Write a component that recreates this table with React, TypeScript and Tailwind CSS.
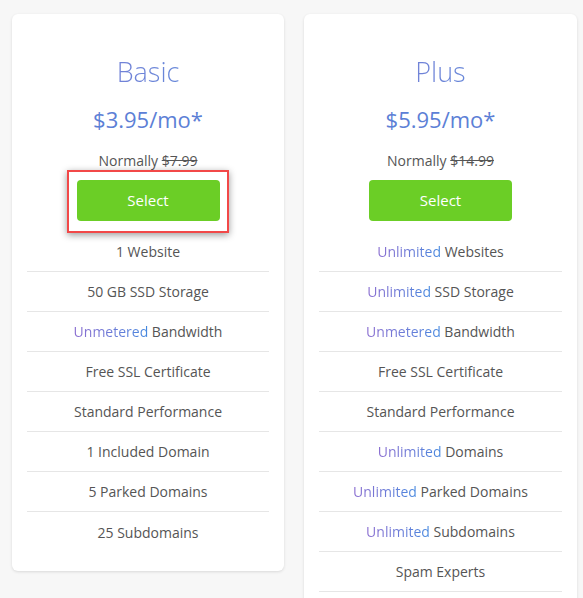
import React from "react";

type Feature = { hl?: string; text: string };

type Plan = {
  name: string;
  price: string;
  normally: string;
  features: Feature[];
  highlight?: boolean;
  width: string;
};

const plans: Plan[] = [
  {
    name: "Basic",
    price: "$3.95/mo*",
    normally: "$7.99",
    highlight: true,
    width: "w-[272px]",
    features: [
      { text: "1 Website" },
      { text: "50 GB SSD Storage" },
      { hl: "Unmetered", text: " Bandwidth" },
      { text: "Free SSL Certificate" },
      { text: "Standard Performance" },
      { text: "1 Included Domain" },
      { text: "5 Parked Domains" },
      { text: "25 Subdomains" },
    ],
  },
  {
    name: "Plus",
    price: "$5.95/mo*",
    normally: "$14.99",
    width: "w-[273px]",
    features: [
      { hl: "Unlimited", text: " Websites" },
      { hl: "Unlimited", text: " SSD Storage" },
      { hl: "Unmetered", text: " Bandwidth" },
      { text: "Free SSL Certificate" },
      { text: "Standard Performance" },
      { hl: "Unlimited", text: " Domains" },
      { hl: "Unlimited", text: " Parked Domains" },
      { hl: "Unlimited", text: " Subdomains" },
      { text: "Spam Experts" },
    ],
  },
];

function PlanCard({ plan }: { plan: Plan }) {
  return (
    <div
      className={`${plan.width} shrink-0 self-start rounded-md bg-white px-[15px] pt-[41px] pb-[19px] text-center shadow-[0_1px_3px_rgba(0,0,0,0.12)]`}
    >
      <h2 className="bg-gradient-to-r from-[#7f79d4] to-[#5490dc] bg-clip-text text-[27px] leading-[34px] font-light text-transparent">
        {plan.name}
      </h2>
      <p className="mt-[15px] text-[22px] leading-[30px] text-[#5c80d6]">
        {plan.price}
      </p>
      <p className="mt-[17px] text-[14px] leading-5 text-[#555]">
        Normally <span className="line-through">{plan.normally}</span>
      </p>
      <div className="mt-[9px] flex justify-center">
        <div className="relative">
          <button
            type="button"
            className="h-[41px] w-[143px] rounded-[4px] bg-[#6bce26] text-[15px] text-white"
          >
            Select
          </button>
          {plan.highlight ? (
            <div className="pointer-events-none absolute -top-[10px] -right-[9px] -bottom-[12px] -left-[10px] border-[2.5px] border-[#f24848] shadow-[0_2px_7px_rgba(0,0,0,0.4)]" />
          ) : null}
        </div>
      </div>
      <ul className="mt-[11px]">
        {plan.features.map((f, i) => (
          <li
            key={i}
            className={`flex h-10 items-center justify-center text-[14px] text-[#555] ${
              plan.name === "Basic" && i === plan.features.length - 1
                ? ""
                : "border-b border-[#e6e6e6]"
            }`}
          >
            <span>
              {f.hl ? (
                <span className="bg-gradient-to-r from-[#8a6dd0] to-[#4388df] bg-clip-text text-transparent">
                  {f.hl}
                </span>
              ) : null}
              {f.text}
            </span>
          </li>
        ))}
      </ul>
    </div>
  );
}

export default function App() {
  return (
    <div
      className="h-[598px] w-[583px] overflow-hidden bg-[#f7f7f7]"
      style={{ fontFamily: '"Open Sans", "Noto Sans", sans-serif' }}
    >
      <div className="flex gap-5 pt-[14px] pl-3">
        {plans.map((p) => (
          <PlanCard key={p.name} plan={p} />
        ))}
      </div>
    </div>
  );
}
